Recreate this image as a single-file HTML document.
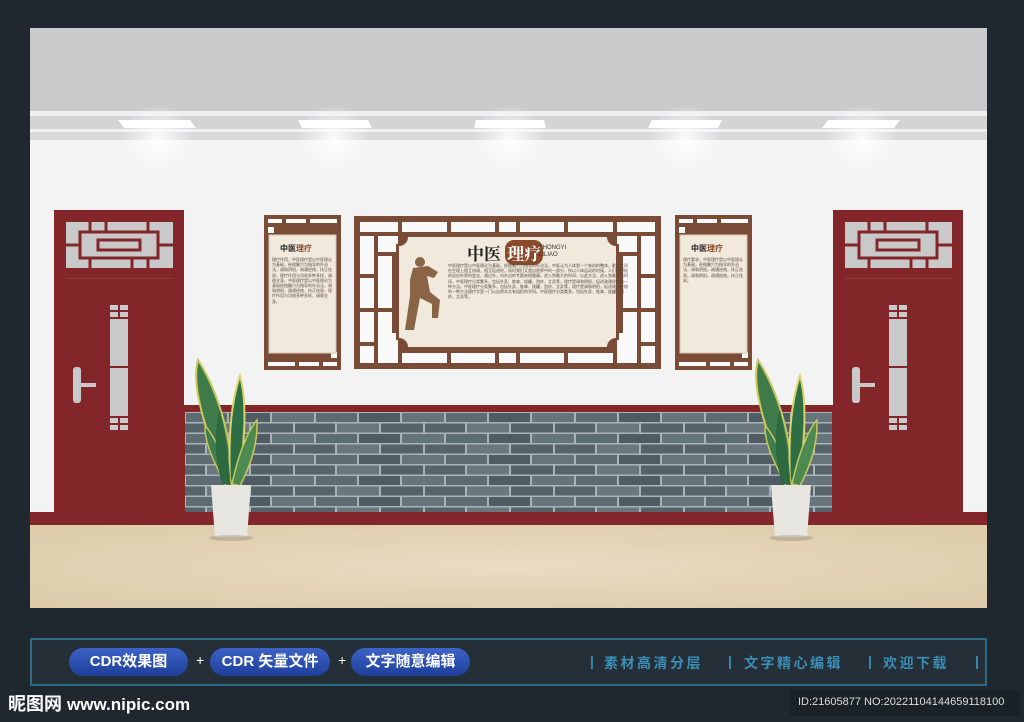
<!DOCTYPE html>
<html><head><meta charset="utf-8"><style>
*{margin:0;padding:0;box-sizing:border-box}
body{width:1024px;height:722px;background:#1e282e;position:relative;overflow:hidden;font-family:"Liberation Sans","Noto Sans CJK SC",sans-serif}
.a{position:absolute}
.btn{position:absolute;top:648px;height:28px;border-radius:14px;background:linear-gradient(#3d63c8,#1e3f9a);color:#fff;font-size:15px;line-height:28px;text-align:center;font-weight:bold}
.plus{position:absolute;top:652px;color:#fff;font-size:14px}
.tiny{font-size:4px;line-height:5.2px;color:#5a4a3e;overflow:hidden;word-break:break-all}
.ft{position:absolute;top:653px;color:#3a8fb8;font-size:14px;letter-spacing:2.5px;font-weight:bold}
</style></head><body>
<div class="a" style="left:30px;top:28px;width:957px;height:580px;background:#f3f3f3;overflow:hidden">
  <div class="a" style="left:0;top:0;width:957px;height:83px;background:#c9cacb"></div>
  <div class="a" style="left:0;top:83px;width:957px;height:5px;background:#f0f0f0"></div>
  <div class="a" style="left:0;top:88px;width:957px;height:13px;background:#d3d4d5"></div>
  <div class="a" style="left:0;top:101px;width:957px;height:3px;background:#f2f2f2"></div>
  <div class="a" style="left:0;top:104px;width:957px;height:8px;background:#d8d9da"></div>
</div>
<svg class="a" style="left:0;top:0" width="1024" height="722">
  <defs><radialGradient id="g"><stop offset="0" stop-color="#fff" stop-opacity=".9"/><stop offset="1" stop-color="#fff" stop-opacity="0"/></radialGradient>
  <pattern id="br" width="130" height="21" patternUnits="userSpaceOnUse" x="185" y="412">
    <rect width="130" height="21" fill="#a9b3b8"/>
    <rect x="1" y="1" width="41" height="9" fill="#5d6b73"/><rect x="44" y="1" width="41" height="9" fill="#4f5c64"/><rect x="87" y="1" width="42" height="9" fill="#66747b"/>
    <rect x="0" y="11.5" width="20" height="9" fill="#56636b"/><rect x="22" y="11.5" width="42" height="9" fill="#6a777e"/><rect x="66" y="11.5" width="42" height="9" fill="#55626a"/><rect x="110" y="11.5" width="20" height="9" fill="#56636b"/>
  </pattern>
  <radialGradient id="fl" cx=".5" cy=".5" r=".7"><stop offset="0" stop-color="#eadcc2"/><stop offset="1" stop-color="#dccaa8"/></radialGradient></defs>
  <g fill="#fff">
    <polygon points="118,120 190,120 196,128 124,128"/><polygon points="298,120 368,120 372,128 302,128"/><polygon points="476,120 544,120 546,128 474,128"/><polygon points="652,120 722,120 718,128 648,128"/><polygon points="828,120 900,120 894,128 822,128"/>
  </g>
  <g fill="url(#g)"><circle cx="158" cy="140" r="36"/><circle cx="334" cy="140" r="36"/><circle cx="510" cy="140" r="36"/><circle cx="686" cy="140" r="36"/><circle cx="862" cy="140" r="36"/></g>
  <rect x="180" y="405" width="655" height="120" fill="#822629"/>
  <rect x="185" y="412" width="647" height="100" fill="url(#br)"/>
  <rect x="30" y="512" width="957" height="13" fill="#822629"/>
  <rect x="30" y="525" width="957" height="83" fill="url(#fl)"/>
  <g id="d">
    <rect x="54" y="210" width="130" height="315" fill="#822629"/>
    <rect x="66" y="222" width="107" height="46" fill="#c9c9c9"/>
    <g fill="none" stroke="#822629" stroke-width="3">
      <rect x="80" y="232" width="78" height="26"/><rect x="98" y="240" width="42" height="10"/>
      <line x1="90" y1="222" x2="90" y2="232"/><line x1="148" y1="222" x2="148" y2="232"/><line x1="90" y1="258" x2="90" y2="268"/><line x1="148" y1="258" x2="148" y2="268"/>
      <line x1="66" y1="245" x2="80" y2="245"/><line x1="158" y1="245" x2="173" y2="245"/><line x1="106" y1="222" x2="106" y2="232"/><line x1="132" y1="258" x2="132" y2="268"/>
    </g>
    <rect x="66" y="278" width="107" height="1" fill="#93393b"/>
    <rect x="110" y="305" width="18" height="125" fill="#c9c9c9"/>
    <g stroke="#822629" stroke-width="2"><line x1="110" y1="318" x2="128" y2="318"/><line x1="110" y1="367" x2="128" y2="367"/><line x1="110" y1="417" x2="128" y2="417"/><line x1="119" y1="305" x2="119" y2="318"/><line x1="119" y1="417" x2="119" y2="430"/><line x1="110" y1="311" x2="128" y2="311"/><line x1="110" y1="424" x2="128" y2="424"/></g>
  </g>
  <rect x="73" y="367" width="8" height="36" rx="3" fill="#c9c9c9"/><rect x="78" y="383" width="18" height="4" fill="#c9c9c9"/>
  <use href="#d" transform="translate(779,0)"/>
  <rect x="852" y="367" width="8" height="36" rx="3" fill="#c9c9c9"/><rect x="857" y="383" width="18" height="4" fill="#c9c9c9"/>
  <g transform="translate(354,216)">
    <rect width="307" height="153" fill="#7a4b37"/>
    <g fill="#fafafa">
      <rect x="6" y="6" width="38" height="10"/><rect x="48" y="6" width="45" height="10"/><rect x="97" y="6" width="44" height="10"/><rect x="145" y="6" width="17" height="10"/><rect x="166" y="6" width="44" height="10"/><rect x="214" y="6" width="45" height="10"/><rect x="263" y="6" width="38" height="10"/>
      <rect x="6" y="20" width="14" height="38"/><rect x="24" y="20" width="20" height="16"/><rect x="6" y="62" width="14" height="30"/><rect x="24" y="40" width="14" height="52"/><rect x="6" y="96" width="14" height="30"/><rect x="24" y="96" width="14" height="30"/><rect x="6" y="130" width="14" height="17"/><rect x="24" y="117" width="20" height="30"/>
      <rect x="287" y="20" width="14" height="38"/><rect x="263" y="20" width="20" height="16"/><rect x="287" y="62" width="14" height="30"/><rect x="269" y="40" width="14" height="52"/><rect x="287" y="96" width="14" height="30"/><rect x="269" y="96" width="14" height="30"/><rect x="287" y="130" width="14" height="17"/><rect x="263" y="117" width="20" height="30"/>
      <rect x="48" y="137" width="45" height="10"/><rect x="97" y="137" width="44" height="10"/><rect x="145" y="137" width="17" height="10"/><rect x="166" y="137" width="44" height="10"/><rect x="214" y="137" width="45" height="10"/>
    </g>
    <path d="M52,18 H255 A10,10 0 0 0 265,28 V124 A10,10 0 0 0 255,134 H52 A10,10 0 0 0 42,124 V28 A10,10 0 0 0 52,18Z" fill="#7a4b37"/>
    <path d="M54,21 H253 A9,9 0 0 0 262,30 V122 A9,9 0 0 0 253,131 H54 A9,9 0 0 0 45,122 V30 A9,9 0 0 0 54,21Z" fill="#f1e9dc"/>
  </g>
  <g id="sp" transform="translate(264,215)">
    <rect width="77" height="155" fill="#7a4b37"/>
    <g fill="#fafafa"><rect x="4" y="4" width="14" height="4"/><rect x="22" y="4" width="20" height="4"/><rect x="46" y="4" width="27" height="4"/><rect x="4" y="147" width="27" height="4"/><rect x="35" y="147" width="20" height="4"/><rect x="59" y="147" width="14" height="4"/><rect x="4" y="12" width="6" height="6"/><rect x="67" y="137" width="6" height="6"/></g>
    <rect x="5" y="20" width="67" height="118" fill="#f1e9dc" stroke="#d9c8b0"/>
  </g>
  <use href="#sp" transform="translate(411,0)"/>
  <g fill="#8a6446"><circle cx="420" cy="262" r="5"/><path d="M413,268 L428,266 L438,272 L434,278 L427,276 L430,292 L440,300 L438,318 L432,318 L432,304 L420,298 L414,330 L405,330 L410,296 L410,280Z"/></g>
  <g id="pl">
    <path d="M226,484 C210,440 190,390 198,360 C214,385 232,430 232,484Z" fill="#3f7a4a" stroke="#c9c85a" stroke-width="2"/>
    <path d="M230,484 C228,430 232,400 240,376 C248,405 244,450 238,484Z" fill="#2f6e45" stroke="#d8d36a" stroke-width="2"/>
    <path d="M232,484 C238,455 248,430 257,420 C258,448 248,470 240,486Z" fill="#4d8a52" stroke="#c8c860" stroke-width="1.5"/>
    <path d="M226,486 C214,462 204,442 205,425 C218,442 228,466 232,486Z" fill="#3e7d4d" stroke="#c3c45c" stroke-width="1.5"/>
    <path d="M222,484 C214,455 214,430 220,410 C226,440 230,465 230,484Z" fill="#2d6a40"/>
    <path d="M211,485 L251,485 L247,537 L215,537Z" fill="#e8e6e0"/>
    <ellipse cx="231" cy="538" rx="22" ry="3" fill="#000" opacity=".15"/>
  </g>
  <use href="#pl" transform="translate(560,0)"/>
</svg>
<div class="a" style="left:467px;top:240px;font-size:17px;font-weight:bold;color:#222;font-family:'Noto Serif CJK SC',serif">中医 <span style="color:#fff;background:#8a4a2a;border-radius:9px;padding:0 2px">理疗</span></div>
<div class="a" style="left:539px;top:245px;font-size:6px;line-height:7px;color:#333">ZHONGYI<br>LILIAO</div>
<div class="a tiny" style="left:448px;top:263px;width:180px;height:80px">中医理疗是以中医理论为基础，经络腧穴为指导的外治法，中医认为人体是一个有机的整体，脏腑之间在生理上相互协调，相互促进的，同时我们又是自然界中的一部分，所以人体运动的时候，人们能积极的适应外界的变化，通过外，内外治的专题来保健康，进入到最大的时间，以此方法，进入到最大的时间，中医理疗分类繁多，包括针灸、推拿、拔罐、刮痧、艾灸等，理疗是调和阴阳，促进疏通经络的一种方法。中医理疗分类繁多，包括针灸、推拿、拔罐、刮痧、艾灸等，理疗是调和阴阳，促进疏通经络的一种方法理疗学是一门以自然本文有组织的学科。中医理疗分类繁多，包括针灸、推拿、拔罐、刮痧、艾灸等。</div>
<div class="a" style="left:280px;top:243px;font-size:8px;font-weight:bold;color:#222">中医<span style="color:#8a4a2a">理疗</span></div>
<div class="a tiny" style="left:272px;top:257px;width:62px;height:80px">理疗作用，中医理疗是以中医理论为基础，经络腧穴为指导的外治法，调和阴阳，疏通经络，扶正祛邪，理疗作用与功效多种多样，调理全身。中医理疗是以中医理论为基础经络腧穴为指导的外治法。调和阴阳，疏通经络，扶正祛邪，理疗作用与功效多种多样，调理全身。</div>
<div class="a" style="left:691px;top:243px;font-size:8px;font-weight:bold;color:#222">中医<span style="color:#8a4a2a">理疗</span></div>
<div class="a tiny" style="left:683px;top:257px;width:62px;height:60px">理疗要求，中医理疗是以中医理论为基础，经络腧穴为指导的外治法，调和阴阳，疏通经络，扶正祛邪。调和阴阳，疏通经络，扶正祛邪。</div>
<div class="a" style="left:30px;top:638px;width:957px;height:48px;border:2px solid #2d6a85;background:#252f37"></div>
<div class="btn" style="left:69px;width:119px">CDR效果图</div>
<div class="plus" style="left:196px">+</div>
<div class="btn" style="left:210px;width:120px">CDR 矢量文件</div>
<div class="plus" style="left:338px">+</div>
<div class="btn" style="left:351px;width:119px">文字随意编辑</div>
<div class="ft" style="left:590px">|</div>
<div class="ft" style="left:604px">素材高清分层</div>
<div class="ft" style="left:728px">|</div>
<div class="ft" style="left:744px">文字精心编辑</div>
<div class="ft" style="left:868px">|</div>
<div class="ft" style="left:883px">欢迎下载</div>
<div class="ft" style="left:975px">|</div>
<div class="a" style="left:8px;top:690px;color:#fff;font-size:18px;font-weight:bold">昵图网 <span style="font-size:17px">www.nipic.com</span></div>
<div class="a" style="left:790px;top:690px;width:230px;height:26px;background:#1a2127"></div>
<div class="a" style="left:798px;top:696px;color:#ddd;font-size:11px">ID:21605877 NO:20221104144659118100</div>
</body></html>
